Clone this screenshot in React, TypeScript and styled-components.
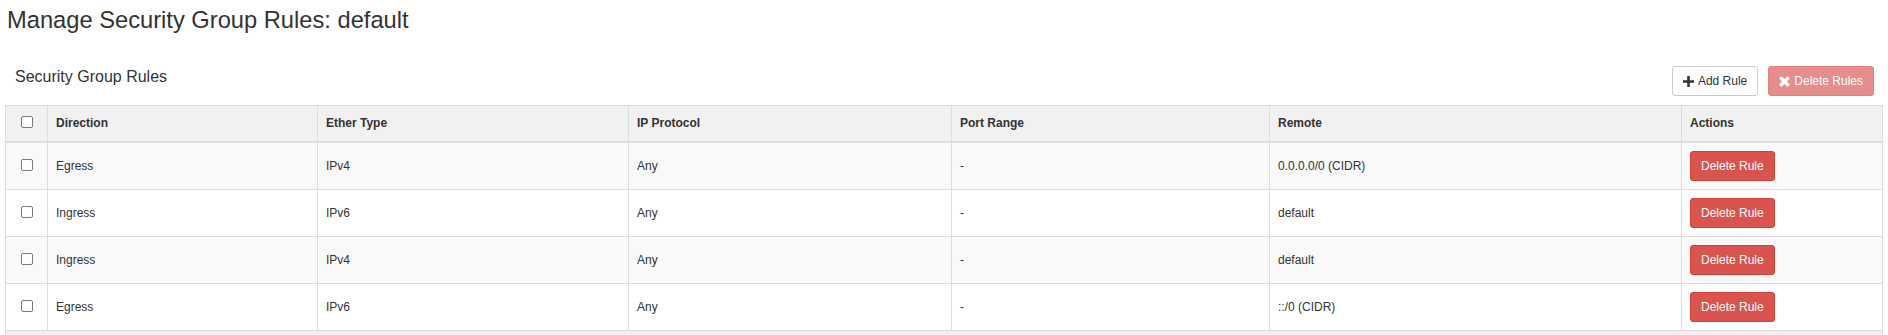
import React from "react";
import styled, { createGlobalStyle } from "styled-components";

const GlobalStyle = createGlobalStyle`
  html, body {
    margin: 0;
    padding: 0;
    background: #fff;
  }
  body {
    font-family: "Liberation Sans", Arial, Helvetica, sans-serif;
    font-size: 12px;
    line-height: 1.42857;
    color: #333;
  }
  * {
    box-sizing: border-box;
  }
`;

type Rule = {
  direction: string;
  etherType: string;
  protocol: string;
  portRange: string;
  remote: string;
};

const rules: Rule[] = [
  { direction: "Egress", etherType: "IPv4", protocol: "Any", portRange: "-", remote: "0.0.0.0/0 (CIDR)" },
  { direction: "Ingress", etherType: "IPv6", protocol: "Any", portRange: "-", remote: "default" },
  { direction: "Ingress", etherType: "IPv4", protocol: "Any", portRange: "-", remote: "default" },
  { direction: "Egress", etherType: "IPv6", protocol: "Any", portRange: "-", remote: "::/0 (CIDR)" },
];

const columns = [
  { label: "Direction", width: 270 },
  { label: "Ether Type", width: 311 },
  { label: "IP Protocol", width: 323 },
  { label: "Port Range", width: 318 },
  { label: "Remote", width: 412 },
];

const Page = styled.div`
  padding: 7px 5px 0 5px;
`;

const PageTitle = styled.h1`
  margin: 0 0 0 2px;
  font-size: 23.7px;
  font-weight: 400;
  line-height: 26px;
  color: #333;
`;

const TableHeader = styled.div`
  display: flex;
  align-items: flex-start;
  justify-content: space-between;
  padding: 26px 9px 9px 9px;
`;

const TableTitle = styled.h3`
  margin: 9px 0 0 1px;
  font-size: 16px;
  font-weight: 400;
  line-height: 1.1;
  color: #333;
`;

const Actions = styled.div`
  display: flex;
  gap: 10px;
  margin-top: 7px;
`;

const Button = styled.button<{ $variant: "default" | "danger"; $disabled?: boolean }>`
  display: inline-flex;
  align-items: center;
  gap: 4px;
  height: 30px;
  padding: 5px 10px;
  font-family: inherit;
  font-size: 12px;
  line-height: 1.5;
  border-radius: 3px;
  border: 1px solid ${(p) => (p.$variant === "danger" ? "#d43f3a" : "#ccc")};
  background: ${(p) => (p.$variant === "danger" ? "#d9534f" : "#fff")};
  color: ${(p) => (p.$variant === "danger" ? "#fff" : "#333")};
  opacity: ${(p) => (p.$disabled ? 0.65 : 1)};
  cursor: ${(p) => (p.$disabled ? "not-allowed" : "pointer")};
  white-space: nowrap;
`;

const Icon = styled.svg`
  width: 11px;
  height: 11px;
  flex: none;
`;

const Table = styled.table`
  width: 1878px;
  border-collapse: collapse;
  border-spacing: 0;
  border: 1px solid #ddd;
  table-layout: fixed;
`;

const HeadCell = styled.th<{ $center?: boolean }>`
  padding: 9px 8px;
  text-align: ${(p) => (p.$center ? "center" : "left")};
  vertical-align: middle;
  font-weight: 700;
  background: #f1f1f1;
  border: 1px solid #ddd;
  border-bottom-width: 2px;
  line-height: 1.42857;
`;

const Row = styled.tr<{ $striped: boolean }>`
  background: ${(p) => (p.$striped ? "#f9f9f9" : "#fff")};
`;

const Cell = styled.td<{ $center?: boolean }>`
  padding: 8px;
  text-align: ${(p) => (p.$center ? "center" : "left")};
  vertical-align: middle;
  border: 1px solid #ddd;
  line-height: 1.42857;
`;

const FootCell = styled.td`
  height: 20px;
  background: #f1f1f1;
  border: 1px solid #ddd;
`;

const Check = styled.span`
  display: inline-block;
  width: 12px;
  height: 12px;
  border: 1px solid #7a7a7a;
  border-radius: 2px;
  background: #fff;
  vertical-align: middle;
  margin-top: -3px;
`;

const PlusIcon = () => (
  <Icon viewBox="0 0 12 12">
    <path d="M4.6 0h2.8v4.6H12v2.8H7.4V12H4.6V7.4H0V4.6h4.6z" fill="#333" />
  </Icon>
);

const CrossIcon = () => (
  <Icon viewBox="0 0 12 12">
    <path
      d="M2.6 0 6 3.4 9.4 0 12 2.6 8.6 6 12 9.4 9.4 12 6 8.6 2.6 12 0 9.4 3.4 6 0 2.6z"
      fill="#fff"
    />
  </Icon>
);

export default function App() {
  return (
    <>
      <GlobalStyle />
      <Page>
        <PageTitle>Manage Security Group Rules: default</PageTitle>
        <TableHeader>
          <TableTitle>Security Group Rules</TableTitle>
          <Actions>
            <Button $variant="default">
              <PlusIcon />
              Add Rule
            </Button>
            <Button $variant="danger" $disabled>
              <CrossIcon />
              Delete Rules
            </Button>
          </Actions>
        </TableHeader>
        <Table>
          <colgroup>
            <col style={{ width: 42 }} />
            {columns.map((c) => (
              <col key={c.label} style={{ width: c.width }} />
            ))}
            <col />
          </colgroup>
          <thead>
            <tr>
              <HeadCell $center>
                <Check />
              </HeadCell>
              {columns.map((c) => (
                <HeadCell key={c.label}>{c.label}</HeadCell>
              ))}
              <HeadCell>Actions</HeadCell>
            </tr>
          </thead>
          <tbody>
            {rules.map((r, i) => (
              <Row key={i} $striped={i % 2 === 0}>
                <Cell $center>
                  <Check />
                </Cell>
                <Cell>{r.direction}</Cell>
                <Cell>{r.etherType}</Cell>
                <Cell>{r.protocol}</Cell>
                <Cell>{r.portRange}</Cell>
                <Cell>{r.remote}</Cell>
                <Cell>
                  <Button $variant="danger">Delete Rule</Button>
                </Cell>
              </Row>
            ))}
          </tbody>
          <tfoot>
            <tr>
              <FootCell colSpan={7} />
            </tr>
          </tfoot>
        </Table>
      </Page>
    </>
  );
}
